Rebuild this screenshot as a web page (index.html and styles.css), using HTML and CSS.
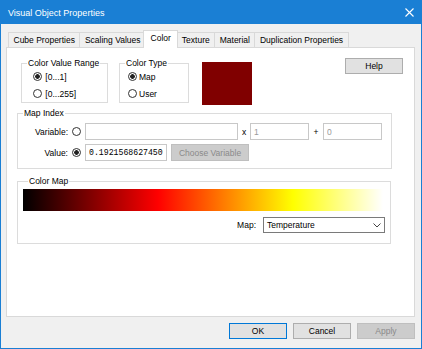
FILE: index.html
```html
<!DOCTYPE html>
<html lang="en">
<head>
  <meta charset="UTF-8" />
  <title>Visual Object Properties</title>
  <link rel="stylesheet" href="styles.css">
</head>
<body>

  <div class="window">

    <!-- TITLE BAR -->
    <div class="titlebar">
      <span class="title">Visual Object Properties</span>
      <svg class="close" width="9" height="9" viewBox="0 0 9 9">
        <path d="M0.5 0.5 L8.5 8.5 M8.5 0.5 L0.5 8.5" stroke="#ffffff" stroke-width="1.1" fill="none" />
      </svg>
    </div>

    <!-- TABS -->
    <div class="tabs">
      <span class="tab">Cube Properties</span>
      <span class="tab">Scaling Values</span>
      <span class="tab active">Color</span>
      <span class="tab">Texture</span>
      <span class="tab">Material</span>
      <span class="tab">Duplication Properties</span>
    </div>

    <!-- TAB PAGE -->
    <div class="panel">

      <div class="top-row">
        <fieldset class="group range">
          <legend>Color Value Range</legend>
          <label class="opt"><input type="radio" name="range" checked> [0...1]</label>
          <label class="opt"><input type="radio" name="range"> [0...255]</label>
        </fieldset>

        <fieldset class="group type">
          <legend>Color Type</legend>
          <label class="opt"><input type="radio" name="type" checked>Map</label>
          <label class="opt"><input type="radio" name="type">User</label>
        </fieldset>

        <div class="swatch"></div>

        <button class="btn help">Help</button>
      </div>

      <fieldset class="group map-index">
        <legend>Map Index</legend>
        <div class="row">
          <span class="lbl">Variable:</span>
          <input type="radio" name="idx">
          <input class="field var" type="text" value="">
          <span class="op">x</span>
          <input class="field num" type="text" value="1">
          <span class="op plus">+</span>
          <input class="field num" type="text" value="0">
        </div>
        <div class="row">
          <span class="lbl">Value:</span>
          <input type="radio" name="idx" checked>
          <input class="field val" type="text" value="0.192156862745098">
          <button class="btn disabled choose">Choose Variable</button>
        </div>
      </fieldset>

      <fieldset class="group color-map">
        <legend>Color Map</legend>
        <div class="gradient"></div>
        <div class="map-row">
          <span>Map:</span>
          <div class="select">
            <span>Temperature</span>
            <svg width="8" height="5" viewBox="0 0 8 5">
              <path d="M0.5 0.5 L4 4 L7.5 0.5" stroke="#444444" stroke-width="1" fill="none" />
            </svg>
          </div>
        </div>
      </fieldset>

    </div>

    <!-- DIALOG BUTTONS -->
    <div class="footer">
      <button class="btn default">OK</button>
      <button class="btn">Cancel</button>
      <button class="btn disabled">Apply</button>
    </div>

  </div>

</body>
</html>
```

FILE: styles.css
```css
* {
  box-sizing: border-box;
}

body {
  margin: 0;
  padding: 0;
  background: #ffffff;
  font-family: "Liberation Sans", Arial, sans-serif;
  font-size: 8.5px;
  color: #000000;
}

.window {
  width: 422px;
  height: 349px;
  background: #f0f0f0;
  border: 1px solid #1a7fd4;
  border-top: none;
  display: flex;
  flex-direction: column;
}

/* TITLE BAR */
.titlebar {
  height: 24px;
  margin: 0 -1px;
  background: #1a7fd4;
  display: flex;
  align-items: center;
  justify-content: space-between;
  padding: 1px 8px 0 8px;
}

.title {
  color: #ffffff;
  font-size: 9px;
}

/* TABS */
.tabs {
  height: 23px;
  display: flex;
  align-items: flex-end;
  padding-left: 7px;
}

.tab {
  height: 15px;
  line-height: 14px;
  padding: 0 4.5px;
  background: #f0f0f0;
  border: 1px solid #d9d9d9;
  border-bottom: none;
  margin-right: -1px;
  white-space: nowrap;
}

.tab.active {
  height: 18px;
  line-height: 15px;
  margin: 0 -2px -1px -2px;
  padding: 0 6.5px;
  background: #ffffff;
  position: relative;
  z-index: 1;
}

/* TAB PAGE */
.panel {
  height: 270px;
  margin: 0 6px 0 5px;
  background: #ffffff;
  border: 1px solid #d9d9d9;
}

.group {
  margin: 0;
  padding: 0;
  border: 1px solid #dcdcdc;
  min-width: 0;
}

.group legend {
  margin-left: 5px;
  padding: 0 1px;
  line-height: 10px;
}

.top-row {
  display: flex;
  align-items: flex-start;
  margin-top: 10px;
  padding-left: 14px;
  height: 47px;
}

.opt {
  display: flex;
  align-items: center;
  height: 17px;
  white-space: pre;
}

input[type="radio"] {
  appearance: none;
  -webkit-appearance: none;
  margin: 0;
  width: 9px;
  height: 9px;
  border: 1px solid #333333;
  border-radius: 50%;
  background: #ffffff;
  flex: none;
}

input[type="radio"]:checked {
  background: radial-gradient(circle, #222222 0 2px, #ffffff 2.6px);
}

.range {
  width: 87px;
}

.range .opt {
  padding-left: 11px;
  gap: 1px;
}

.type {
  width: 70px;
  margin-left: 11px;
}

.type .opt {
  padding-left: 8px;
  gap: 2px;
}

.swatch {
  width: 50px;
  height: 43px;
  margin: 4px 0 0 13px;
  background: #800000;
}

/* BUTTONS */
.btn {
  font: inherit;
  height: 16px;
  padding: 0;
  background: #e1e1e1;
  border: 1px solid #adadad;
  color: #000000;
}

.btn.default {
  border-color: #0078d7;
}

.btn.disabled {
  background: #cccccc;
  border-color: #bfbfbf;
  color: #8a8a8a;
}

.help {
  width: 58px;
  margin-left: auto;
  margin-right: 11px;
}

/* MAP INDEX */
.map-index {
  width: 375px;
  margin: 3px 0 0 10px;
  padding: 5px 0 7px 0;
}

.row {
  display: flex;
  align-items: center;
  height: 17px;
}

.row + .row {
  margin-top: 4px;
}

.lbl {
  width: 50px;
  text-align: right;
  margin-right: 4px;
}

.field {
  font: inherit;
  height: 17px;
  padding: 0 3px;
  border: 1px solid #c8c8c8;
  background: #ffffff;
  color: #000000;
  outline: none;
}

.row input[type="radio"] + .field {
  margin-left: 4px;
}

.field.var {
  width: 153px;
}

.field.num {
  width: 59px;
  color: #9a9a9a;
}

.field.val {
  width: 82px;
  font-family: "Liberation Mono", monospace;
  font-size: 8.2px;
}

.op {
  width: 12px;
  text-align: center;
}

.op.plus {
  width: 14px;
}

.choose {
  width: 78px;
  height: 17px;
  margin-left: 4px;
}

/* COLOR MAP */
.color-map {
  width: 374px;
  margin: 7px 0 0 10px;
  padding: 3px 5px 10px 5px;
}

.gradient {
  height: 22px;
  width: 360px;
  background: linear-gradient(to right, #000000 0%, #ff0000 37.5%, #ffff00 75%, #ffffff 100%);
}

.map-row {
  display: flex;
  align-items: center;
  justify-content: flex-end;
  gap: 7px;
  margin-top: 6px;
}

.select {
  width: 122px;
  height: 16px;
  border: 1px solid #7a7a7a;
  background: #ffffff;
  display: flex;
  align-items: center;
  justify-content: space-between;
  padding: 0 3px 0 3px;
}

/* FOOTER */
.footer {
  display: flex;
  justify-content: flex-end;
  gap: 6px;
  margin-top: 6px;
  padding-right: 6px;
}

.footer .btn {
  width: 58px;
}
```
